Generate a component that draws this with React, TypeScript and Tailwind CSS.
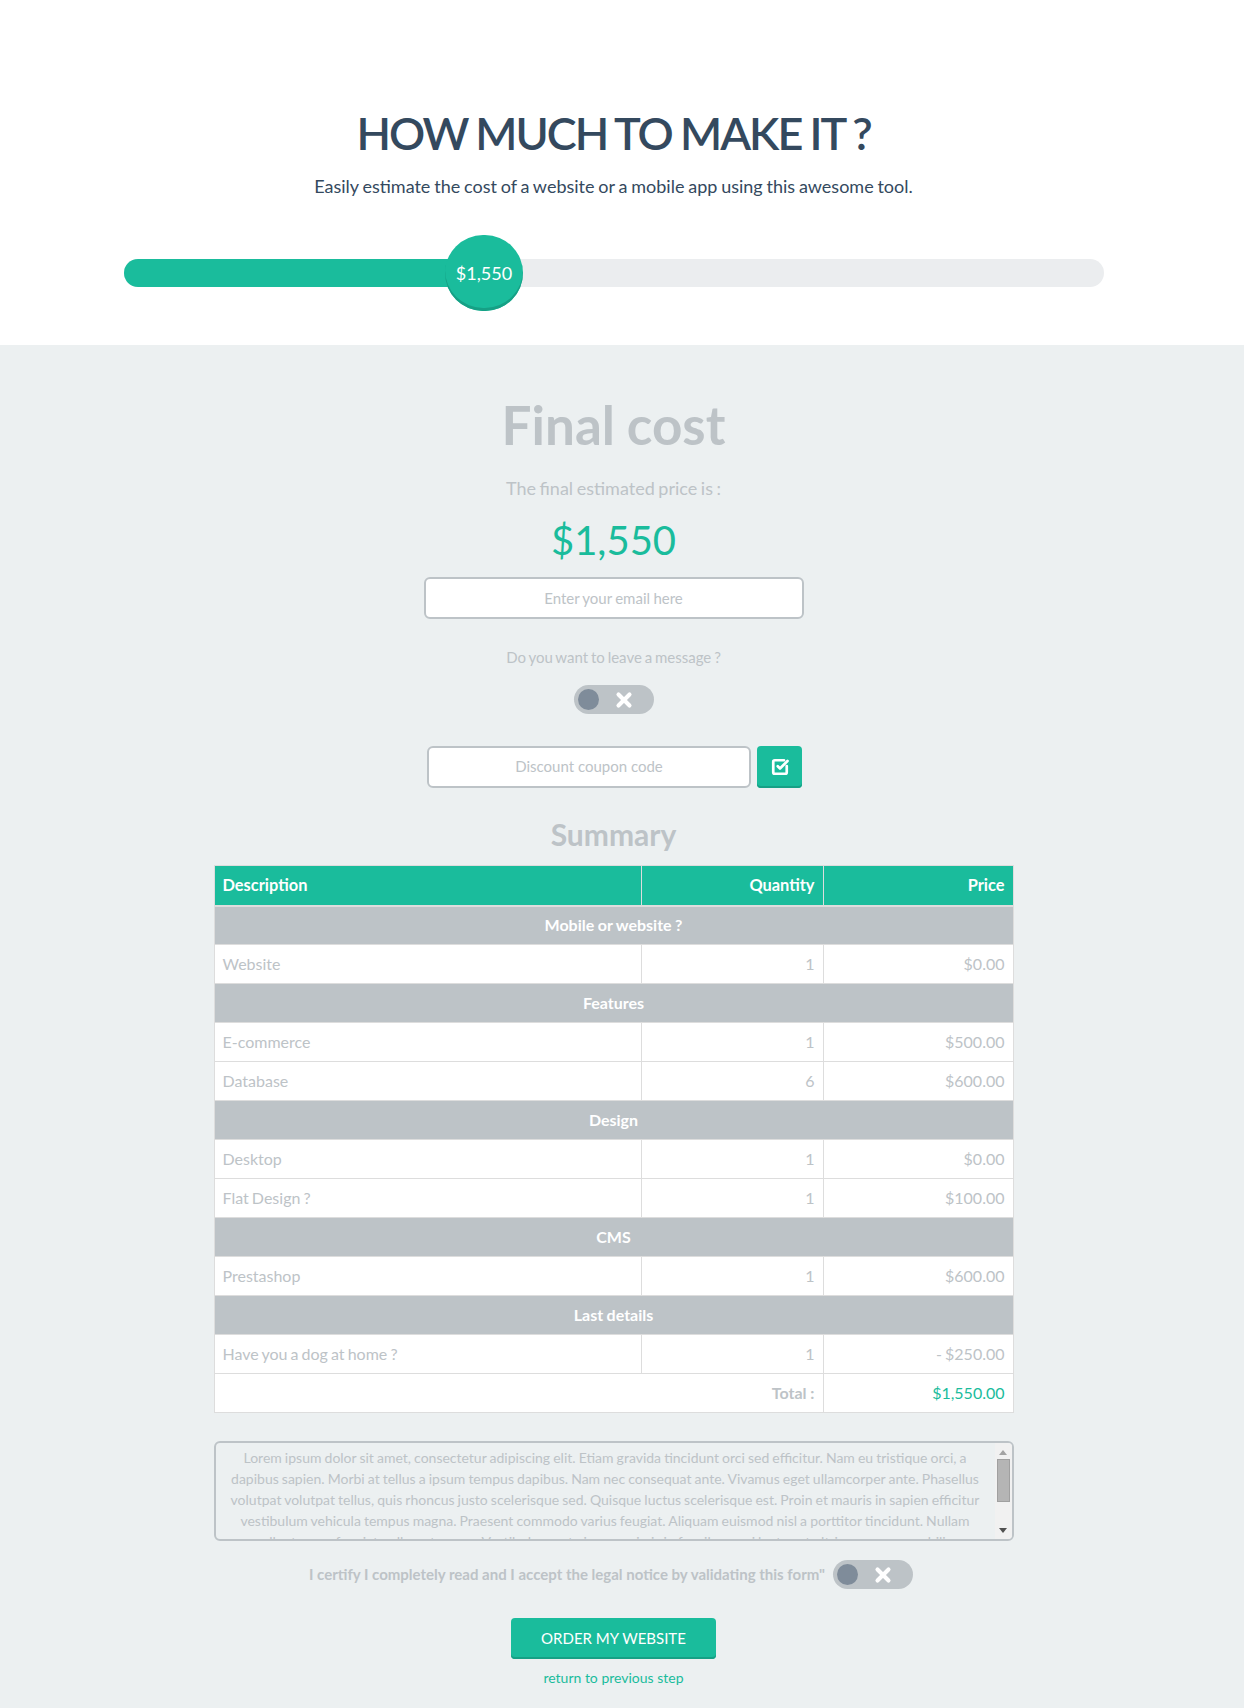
import { X, SquareCheckBig } from 'lucide-react';

const font = { fontFamily: 'Lato, sans-serif' };

type Row =
  | { section: string }
  | { name: string; qty: string; price: string };

const rows: Row[] = [
  { section: 'Mobile or website ?' },
  { name: 'Website', qty: '1', price: '$0.00' },
  { section: 'Features' },
  { name: 'E-commerce', qty: '1', price: '$500.00' },
  { name: 'Database', qty: '6', price: '$600.00' },
  { section: 'Design' },
  { name: 'Desktop', qty: '1', price: '$0.00' },
  { name: 'Flat Design ?', qty: '1', price: '$100.00' },
  { section: 'CMS' },
  { name: 'Prestashop', qty: '1', price: '$600.00' },
  { section: 'Last details' },
  { name: 'Have you a dog at home ?', qty: '1', price: '- $250.00' },
];

function Toggle() {
  return (
    <div className="flex h-[29px] w-[80px] shrink-0 items-center rounded-full bg-[#bdc3c7] pl-[4px]">
      <span className="h-[21px] w-[21px] rounded-full bg-[#7f8c9a]" />
      <X className="ml-[14px] h-[22px] w-[22px] text-white" strokeWidth={4.5} />
    </div>
  );
}

export default function App() {
  return (
    <div className="min-h-[1708px] bg-[#ecf0f1] text-[#bdc3c7] [word-spacing:-1px]" style={font}>
      <header className="flex h-[345px] flex-col items-center bg-white pt-[106px] pr-[17px]">
        <h1 className="text-[45px] leading-[54px] font-semibold tracking-[-2px] text-[#34495e]">HOW MUCH TO MAKE IT ?</h1>
        <p className="mt-[13px] text-[18px] leading-[26px] text-[#34495e] [word-spacing:-0.8px]">
          Easily estimate the cost of a website or a mobile app using this awesome tool.
        </p>
        <div className="relative mt-[60px] ml-[1px] h-[28px] w-[980px] rounded-full bg-[#ebedef]">
          <div className="h-full w-[361px] rounded-full bg-[#1abc9c]" />
          <div className="absolute top-[-24px] left-[321px] flex h-[76px] w-[78px] items-center justify-center rounded-full bg-[#1abc9c] text-[18px] text-white shadow-[inset_0_-3px_0_#16a085]">
            $1,550
          </div>
        </div>
      </header>

      <main className="flex flex-col items-center pr-[17px]">
        <h2 className="mt-[48px] text-[53px] leading-[64px] font-bold">Final cost</h2>
        <p className="mt-[18px] text-[18px] leading-[26px]">The final estimated price is :</p>
        <div className="mt-[14px] text-[40px] leading-[50px] text-[#1abc9c]">$1,550</div>
        <input
          className="mt-[12px] h-[42px] w-[380px] rounded-[6px] border-2 border-[#bdc3c7] bg-white text-center text-[15px] outline-none [word-spacing:-0.5px] placeholder:text-[#bdc3c7]"
          placeholder="Enter your email here"
        />
        <p className="mt-[27px] text-[15px] leading-[22px]">Do you want to leave a message ?</p>
        <div className="mt-[17px]">
          <Toggle />
        </div>
        <div className="mt-[32px] ml-[2px] flex gap-[6px]">
          <input
            className="h-[42px] w-[324px] rounded-[6px] border-2 border-[#bdc3c7] bg-white pb-[2px] text-center text-[15px] outline-none placeholder:text-[#bdc3c7]"
            placeholder="Discount coupon code"
          />
          <button className="flex h-[42px] w-[45px] items-center justify-center rounded-[4px] bg-[#1abc9c] pb-[1px] text-white shadow-[inset_0_-2px_0_#16a085]">
            <SquareCheckBig className="h-[18px] w-[18px]" strokeWidth={3.6} />
          </button>
        </div>

        <h3 className="mt-[28px] text-[30px] leading-[36px] font-bold">Summary</h3>

        <table className="mt-[13px] w-[800px] table-fixed border-collapse text-[16px]">
          <colgroup>
            <col className="w-[427px]" />
            <col className="w-[182px]" />
            <col />
          </colgroup>
          <thead>
            <tr className="h-[40px] bg-[#1abc9c] text-[16.4px] font-bold text-white">
              <th className="border border-b-2 border-[#ddd] px-[8px] text-left">Description</th>
              <th className="border border-b-2 border-[#ddd] px-[8px] text-right">Quantity</th>
              <th className="border border-b-2 border-[#ddd] px-[8px] text-right">Price</th>
            </tr>
          </thead>
          <tbody>
            {rows.map((row, i) =>
              'section' in row ? (
                <tr key={i} className="h-[39px] bg-[#bdc3c7] font-bold text-white">
                  <td colSpan={3} className="border border-[#ddd] px-[8px] text-center [word-spacing:-0.4px]">
                    {row.section}
                  </td>
                </tr>
              ) : (
                <tr key={i} className="h-[39px] bg-white">
                  <td className="border border-[#ddd] px-[8px]">{row.name}</td>
                  <td className="border border-[#ddd] px-[8px] text-right">{row.qty}</td>
                  <td className="border border-[#ddd] px-[8px] text-right">{row.price}</td>
                </tr>
              ),
            )}
            <tr className="h-[39px] bg-white">
              <td colSpan={2} className="border border-[#ddd] px-[8px] text-right font-bold [word-spacing:0]">
                Total :
              </td>
              <td className="border border-[#ddd] px-[8px] text-right text-[#1abc9c]">$1,550.00</td>
            </tr>
          </tbody>
        </table>

        <div className="mt-[28px] flex h-[100px] w-[800px] overflow-hidden rounded-[6px] border-2 border-[#bdc3c7]">
          <div className="flex-1 overflow-hidden px-[10px] py-[4px] text-center text-[14px] leading-[21px] [word-spacing:-0.5px]">
            Lorem ipsum dolor sit amet, consectetur adipiscing elit. Etiam gravida tincidunt orci sed efficitur. Nam eu
            tristique orci, a dapibus sapien. Morbi at tellus a ipsum tempus dapibus. Nam nec consequat ante. Vivamus
            eget ullamcorper ante. Phasellus volutpat volutpat tellus, quis rhoncus justo scelerisque sed. Quisque
            luctus scelerisque est. Proin et mauris in sapien efficitur vestibulum vehicula tempus magna. Praesent
            commodo varius feugiat. Aliquam euismod nisl a porttitor tincidunt. Nullam pellentesque feugiat nulla ac
            tempus. Vestibulum ante ipsum primis in faucibus orci luctus et ultrices posuere cubilia.
          </div>
          <div className="flex w-[17px] flex-col items-center bg-[#f1f1f1] pt-[7px] pb-[6px]">
            <span className="h-0 w-0 border-x-[4px] border-b-[5px] border-x-transparent border-b-[#a3a3a3]" />
            <span className="mt-[4px] h-[43px] w-[13px] border border-[#a0a0a0] bg-[#b5b5b5]" />
            <span className="mt-auto h-0 w-0 border-x-[4px] border-t-[5px] border-x-transparent border-t-[#505050]" />
          </div>
        </div>

        <div className="mt-[19px] mr-[5px] flex items-center gap-[8px]">
          <span className="text-[15px] font-bold [word-spacing:0]">I certify I completely read and I accept the legal notice by validating this form"</span>
          <Toggle />
        </div>

        <button className="mt-[29px] h-[41px] w-[205px] rounded-[4px] bg-[#1abc9c] text-[15px] text-white shadow-[inset_0_-2px_0_#16a085]">
          ORDER MY WEBSITE
        </button>
        <a className="mt-[9px] text-[14px] leading-[20px] text-[#1abc9c] [word-spacing:0]">return to previous step</a>
      </main>
    </div>
  );
}
